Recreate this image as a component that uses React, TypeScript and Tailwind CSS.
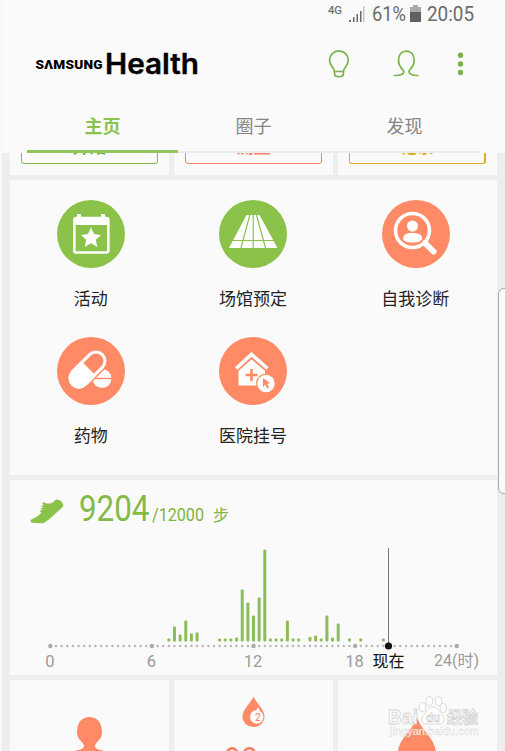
import type { ReactNode } from "react";

const GREEN = "#8bc34a";
const CORAL = "#ff8a65";

// One slot is 20 minutes, [slot, height]
const steps: [number, number][] = [
	[21, 3], [22, 15], [23, 7], [24, 21], [25, 8], [26, 9],
	[30, 3], [31, 3], [32, 3], [33, 4], [34, 52], [35, 39],
	[36, 26], [37, 44], [38, 92], [39, 3], [40, 3], [41, 3],
	[42, 21], [43, 3], [44, 3], [46, 4.5], [47, 6], [48, 3],
	[49, 26], [50, 4], [51, 18], [53, 3], [55, 3], [59, 3],
];

const SLOT = 5.645;
const START = 40.3;

function StatusBar() {
	return (
		<svg className="h-7 w-full text-[#6b6b6b]" viewBox="0 0 505 28" fontFamily="Roboto, sans-serif">
			<text x="328" y="14" fontSize="10" fill="currentColor" stroke="currentColor" strokeWidth=".2" textLength="14" lengthAdjust="spacingAndGlyphs">4G</text>
			<path d="M349 22v-2h2v2zM353 22v-5h1.5v5zM356.5 22v-8h1.5v8zM360 22V11h1.5v11z" fill="currentColor" />
			<path d="M363 22V6h1.5v16z" fill="#c4c4c4" />
			<text x="372" y="21" fontSize="20.5" fill="currentColor" textLength="34" lengthAdjust="spacingAndGlyphs">61%</text>
			<path d="M413 5h5v2h3v6h-11V7h3z" fill="#aaa" />
			<path d="M410 12h11v10h-11z" fill="#606060" />
			<text x="427" y="21" fontSize="20.5" fill="currentColor" textLength="47" lengthAdjust="spacingAndGlyphs">20:05</text>
		</svg>
	);
}

function Header() {
	return (
		<header className="relative z-10 h-[153px] bg-[#fafafa]">
			<StatusBar />
			<svg className="h-[72px] w-full" viewBox="0 28 505 72" fill="none">
				<text x="35.5" y="69" fontSize="13.6" fontWeight="900" fontFamily="Roboto, sans-serif" fill="#000" textLength="67">SΛMSUNG</text>
				<text x="105" y="74" fontSize="28.5" fontWeight="600" fontFamily="Inter, sans-serif" fill="#000" stroke="#000" strokeWidth=".4" textLength="94" lengthAdjust="spacingAndGlyphs">Health</text>
				<g stroke="#79b34b" strokeWidth="1.7" strokeLinejoin="round" strokeLinecap="round">
					<path d="M334.5 71.5c0-4-5-5.5-5-11.2a9.4 9.4 0 0 1 18.8 0c0 5.7-4.9 7.2-4.9 11.2z" />
					<path d="M334.5 71.5v2.2c0 4 8.9 4 8.9 0v-2.2" />
					<path d="M394.5 75.5c5 0 9.3-1.5 9.3-4 0-2-5.3-4.2-5.3-10.8 0-6 3.2-9.6 7.8-9.6s7.9 3.6 7.9 9.6c0 6.6-5.3 8.8-5.3 10.8 0 2.5 4.3 4 8.8 4" />
				</g>
				<g fill="#79b34b">
					<circle cx="460.5" cy="55.3" r="2.7" />
					<circle cx="460.5" cy="64" r="2.7" />
					<circle cx="460.5" cy="72.5" r="2.7" />
				</g>
			</svg>
			<nav className="ml-[27px] grid w-[453px] grid-cols-3 text-center text-[18px] leading-[50px] text-[#858585]">
				<div className="h-[53px] border-b-3 border-[#93c65b] font-bold text-[#8bc34a]">主页</div>
				<div className="h-[53px] border-b-2 border-[#ececec]">圈子</div>
				<div className="h-[53px] border-b-2 border-[#ececec]">发现</div>
			</nav>
		</header>
	);
}

function ActionCard({ label, className }: { label: string; className: string }) {
	return (
		<div className="h-[46px] bg-[#fafafa] px-[11px]">
			<div className={`h-[35px] rounded-[3px] border text-center text-[17px] leading-[31px] font-bold ${className}`}>{label}</div>
		</div>
	);
}

function Service({ label, color, children }: { label: string; color: string; children: ReactNode }) {
	return (
		<div className="flex h-[137px] flex-col items-center">
			<svg className="size-[68px]" viewBox="0 0 68 68" fill="none">
				<circle cx="34" cy="34" r="34" fill={color} />
				{children}
			</svg>
			<div className="mt-[17px] mr-px text-[17px] leading-[26px] whitespace-nowrap text-[#222]">{label}</div>
		</div>
	);
}

function Services() {
	return (
		<section className="h-[295px] bg-[#fafafa] pt-5">
			<div className="grid grid-cols-3">
				<Service label="活动" color={GREEN}>
					<rect x="17.3" y="18" width="34" height="34.5" rx="2" stroke="#fff" strokeWidth="2.6" />
					<path d="M17 17h34v8H17zM20 14h4v6h-4zM44 14h4v6h-4z" fill="#fff" />
					<path d="m34 27.5 3 6.6 7 .8-5.2 4.9 1.5 7.2-6.3-3.7-6.3 3.7 1.5-7.2-5.2-4.9 7-.8z" fill="#fff" />
				</Service>
				<Service label="场馆预定" color={GREEN}>
					<path d="M27.5 15h13l18 33H10z" fill="#fff" />
					<path d="M13 40.5h42M34.2 15v33M30.8 15 22 48M37.5 15l9 33" stroke={GREEN} strokeWidth="1.2" />
				</Service>
				<Service label="自我诊断" color={CORAL}>
					<circle cx="30.5" cy="30.5" r="17" stroke="#fff" strokeWidth="3.6" />
					<path d="m43 43 8.5 8.5" stroke="#fff" strokeWidth="6" strokeLinecap="round" />
					<circle cx="30.5" cy="26" r="5.5" fill="#fff" />
					<path d="M21 38.5c0-4 3.5-5.5 9.500-5.5s9.500 1.500 9.500 5.500c0 2.500-3.500 4-9.500 4S21 41 21 38.500z" fill="#fff" />
				</Service>
				<Service label="药物" color={CORAL}>
					<circle cx="45" cy="41.5" r="9.5" fill="#fff" />
					<path d="M35 41.5h20" stroke={CORAL} strokeWidth="1.5" />
					<g transform="rotate(45 30.5 32.5)">
						<rect x="20" y="10" width="21" height="45" rx="10.5" fill={CORAL} stroke={CORAL} strokeWidth="3" />
						<rect x="21.5" y="11.5" width="18" height="42" rx="9" stroke="#fff" strokeWidth="3" />
						<path d="M20 31h21v13.5a10.5 10.5 0 0 1-21 0z" fill="#fff" />
					</g>
				</Service>
				<Service label="医院挂号" color={CORAL}>
					<path d="M19.5 31 32.500 20l13.500 11v17.500H19.500z" fill="#fff" />
					<path d="M17 32.500 32.500 19 48.500 32.500" stroke={CORAL} strokeWidth="5" />
					<path d="M17 31.500 32.500 17.500 48.500 31.500" stroke="#fff" strokeWidth="3.6" />
					<path d="M32.500 32v12M26.500 38h12" stroke={CORAL} strokeWidth="2.6" />
					<circle cx="47" cy="46.5" r="10" fill={CORAL} />
					<circle cx="47" cy="46.5" r="8.7" fill="#fff" />
					<path d="m44 41 7.200 5.200-3.200.5 2.300 3.800-1.900 1-2.200-3.800-2.200 2.200z" fill={CORAL} />
				</Service>
			</div>
		</section>
	);
}

function StepsChart() {
	return (
		<svg className="h-[195px] w-full" viewBox="0 0 487 195" fontFamily="Roboto, 'Noto Sans CJK SC', sans-serif">
			<path d="M20.7 40.5v1.8l3.3.8c4 .2 7 .2 9.300-.1 2-.6 4-2.500 6.700-4.500L52.700 27c.7-1 .7-2.200.3-3-.5-1.500-2-3-4-4-1.500-.8-3-.9-4 .2-1.200 1.500-2.500 2.800-5 3.300-2.500.2-5-.2-7-1.500l-.6 2.300 1.800.6-3.200 1.100 2.500 1.200-3.200 1.200 2.500 1.200-3.500 1.300 2.300 1.600c-2.500 3.500-6.900 5-10.900 7.500z" fill={GREEN} />
			<text x="69" y="41.3" fontSize="37" fill="#84bb48" textLength="70.5" lengthAdjust="spacingAndGlyphs">9204</text>
			<g fill="#7eb443">
				<text x="142" y="41" fontSize="18" textLength="52" lengthAdjust="spacingAndGlyphs">/12000</text>
				<text x="203" y="41" fontSize="16">步</text>
			</g>
			{steps.map(([slot, height]) => (
				<rect key={slot} x={START + slot * SLOT - 1.5} y={161.6 - height} width="3" height={height} rx="1" fill="#8bbd5a" />
			))}
			{[...Array(73)].map((_, slot) => (
				<circle key={slot} cx={START + slot * SLOT} cy="166" r={slot % 18 === 0 ? 2.2 : 1.2} fill={slot % 18 === 0 ? "#aaa" : "#b4b4b4"} />
			))}
			<path d="M378.500 68v98" stroke="#777" />
			<circle cx="378.5" cy="166" r="3.6" fill="#111" />
			<g fontSize="16.5" fill="#9b9b9b" textAnchor="middle">
				<text x="40" y="187.3">0</text>
				<text x="141.5" y="187.3">6</text>
				<text x="243" y="187.3">12</text>
				<text x="344.5" y="187.3">18</text>
				<text x="378.5" y="187.3" fontSize="16" fill="#111">现在</text>
				<text x="446.5" y="186.3" fontSize="16">24(时)</text>
			</g>
		</svg>
	);
}

function Watermark() {
	return (
		<svg className="absolute top-[690px] left-[378px] h-[52px] w-[105px]" viewBox="0 0 105 52" fontFamily="'Liberation Sans', 'Noto Sans CJK SC', sans-serif" fill="#fff" stroke="#d2d2d2" strokeWidth=".8">
			<text x="8" y="34" fontSize="21" fontWeight="bold" textLength="30" lengthAdjust="spacingAndGlyphs">Bai</text>
			<ellipse cx="42.5" cy="17" rx="3.3" ry="4.5" />
			<ellipse cx="49.3" cy="11" rx="3.3" ry="4.5" />
			<ellipse cx="58.5" cy="11" rx="3.3" ry="4.5" />
			<ellipse cx="63.3" cy="18" rx="3.3" ry="4.5" />
			<path d="M53 17c5 0 6 5 9 8 4 3 2 10-4 9H48c-6 1-8-6-4-9 3-3 4-8 9-8z" />
			<text x="46" y="32" fontSize="12" fontWeight="bold" textLength="14" lengthAdjust="spacingAndGlyphs">du</text>
			<text x="67" y="33" fontSize="16" fontWeight="bold" textLength="31" lengthAdjust="spacingAndGlyphs">经验</text>
			<text x="10" y="45" fontSize="10" strokeWidth=".3" textLength="89" lengthAdjust="spacingAndGlyphs">jingyan.baidu.com</text>
		</svg>
	);
}

export default function App() {
	return (
		<div className="relative h-[751px] w-[505px] overflow-hidden border-l-2 border-[#f8f8f8] bg-[#eee] font-['Noto_Sans_CJK_SC',sans-serif]">
			<div className="-ml-[2px]">
				<Header />
				<main className="-mt-[24px] ml-[10px] flex w-[487px] flex-col gap-[5px]">
					<div className="grid grid-cols-3 gap-[5px]">
						<ActionCard label="开始" className="border-[#80b94d] text-[#79b34b]" />
						<ActionCard label="测量" className="border-[#f5836a] text-[#f5836a]" />
						<ActionCard label="记录" className="border-r-2 border-[#dfae1c] text-[#dfae1c]" />
					</div>
					<Services />
					<section className="h-[195px] bg-[#fafafa]">
						<StepsChart />
					</section>
					<div className="grid grid-cols-3 gap-[5px]">
						<div className="h-[71px] bg-[#fafafa]">
							<svg className="h-[71px] w-full" viewBox="0 0 159 71">
								<path d="M67.5 49c0-7 5-12 12-12s12 5 12 12l.7 2-.7 5c-2 5-6.500 7-6.500 10 0 4 7 3.500 11 6H63c4-2.500 11-2 11-6 0-3-4.500-5-6.500-10l-.7-5z" fill={CORAL} />
							</svg>
						</div>
						<div className="h-[71px] bg-[#fafafa]">
							<svg className="h-[71px] w-full" viewBox="0 0 159 71">
								<path d="M79.5 16.5c3 7 11 13 11 20a11 10.5 0 0 1-22 0c0-7 8-13 11-20z" fill={CORAL} />
								<circle cx="82.7" cy="37" r="6.7" fill="#fff" />
								<path d="m84 27 2 4h-4z" fill="#fff" />
								<text x="81" y="41" fontSize="10" fill="#e07a5f" fontFamily="Roboto, sans-serif">2</text>
								<text x="50" y="91" fontSize="34" fill="#f28369" fontFamily="Roboto, sans-serif" textLength="34" lengthAdjust="spacingAndGlyphs">98</text>
							</svg>
						</div>
						<div className="h-[71px] bg-[#fafafa]">
							<svg className="h-[71px] w-full" viewBox="0 0 159 71">
								<path d="M79 37c4 14 20 22 19 38H60c-1-16 15-24 19-38z" fill={CORAL} />
							</svg>
						</div>
					</div>
				</main>
			</div>
			<div className="absolute top-[288px] -right-2 h-[206px] w-[15px] rounded-l-[6px] border border-[#aaa] bg-[#fafafa]" />
			<Watermark />
		</div>
	);
}
